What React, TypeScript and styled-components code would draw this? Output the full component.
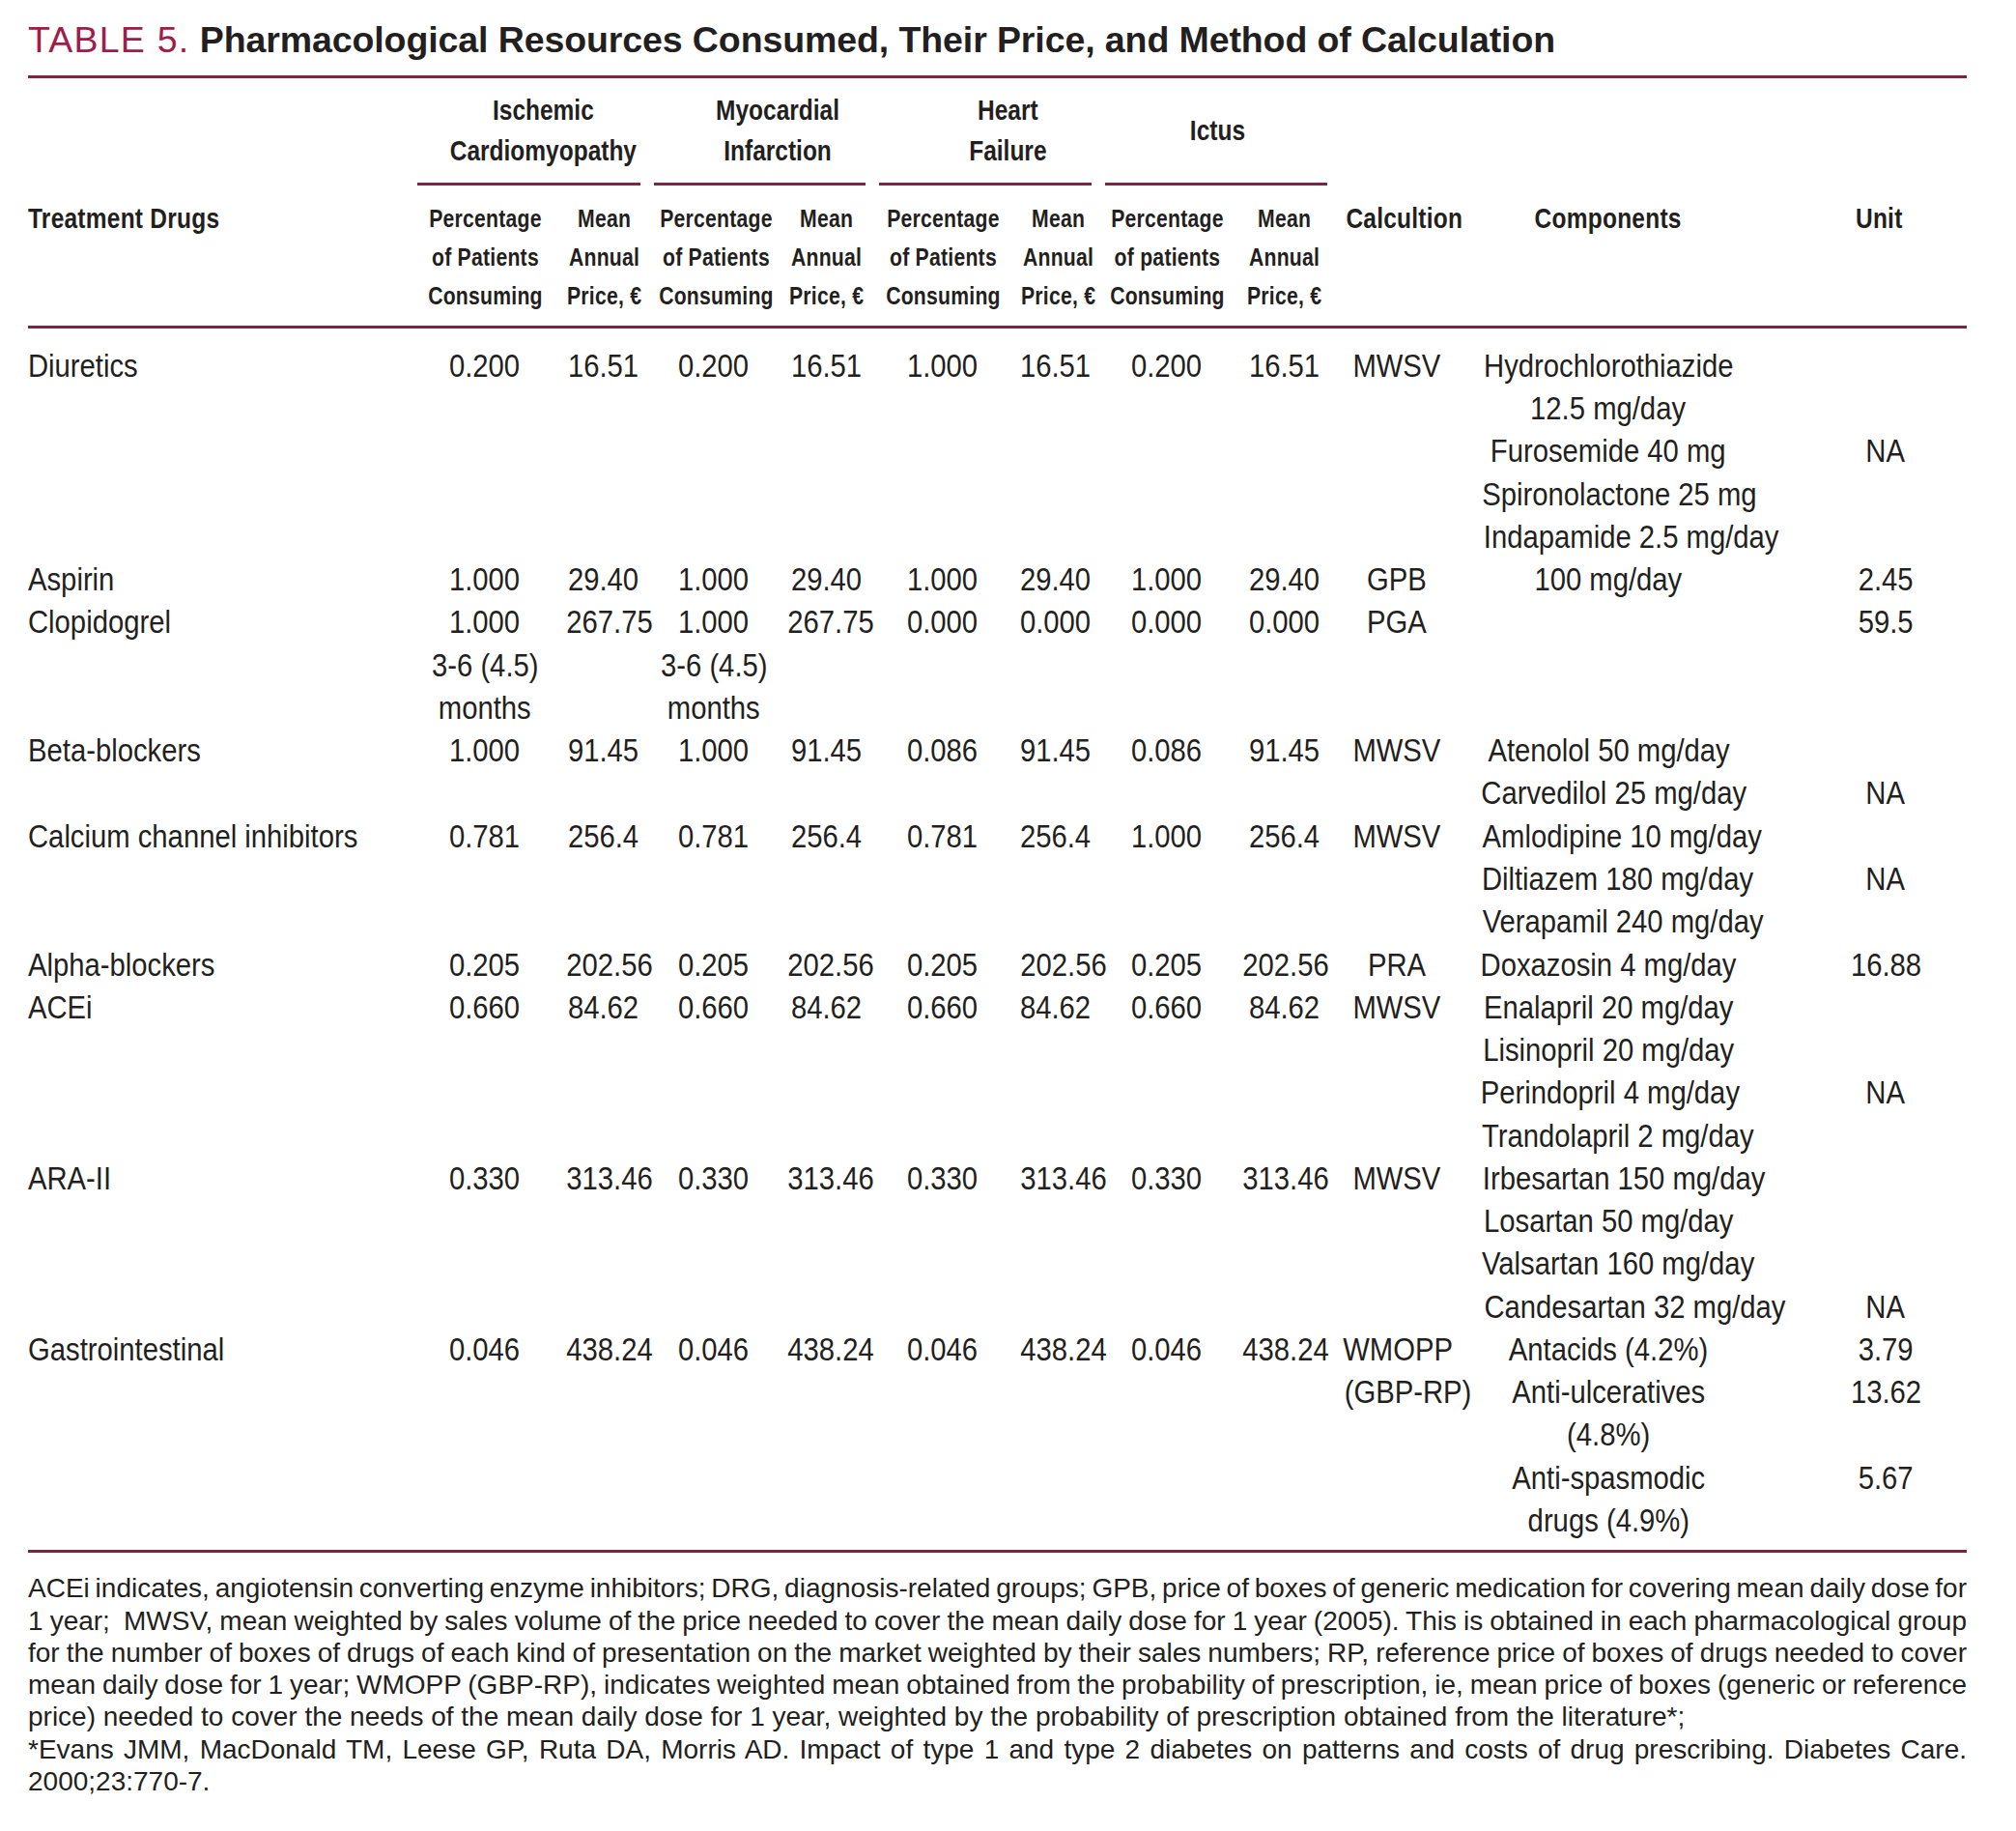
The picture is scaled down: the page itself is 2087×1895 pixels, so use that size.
import React from "react";
import styled, { createGlobalStyle } from "styled-components";

const MAROON = "#7b2545";
const TITLE_RED = "#a01d4a";
const INK = "#231f20";
const SANS = `"Liberation Sans", Arial, Helvetica, sans-serif`;

const BODY_SX = 0.86;
const HEAD_SX = 0.83;

const GlobalStyle = createGlobalStyle`
  html, body { margin: 0; padding: 0; background: #ffffff; }
  body { color: ${INK}; font-family: ${SANS}; }
`;

const Page = styled.div`
  width: 2007px;
  padding: 19px 51px 0 29px;
`;

const Title = styled.h1`
  margin: 0 0 15px;
  font-family: ${SANS};
  font-size: 37.5px;
  line-height: 44px;
  font-weight: 400;
  white-space: nowrap;
`;

const TitleLabel = styled.span`
  color: ${TITLE_RED};
  font-weight: 400;
  letter-spacing: 1.2px;
`;

const TitleText = styled.span`
  color: ${INK};
  font-weight: 700;
  letter-spacing: -0.1px;
`;

/* condensed face: the source uses a condensed grotesque, drawn here by narrowing Liberation Sans */
const Squeeze = styled.span<{ $sx: number; $origin?: string }>`
  display: inline-block;
  transform: scaleX(${(p) => p.$sx});
  transform-origin: ${(p) => p.$origin ?? "center"} center;
`;

const Table = styled.table`
  width: 2007px;
  table-layout: fixed;
  border-collapse: separate;
  border-spacing: 0;
  border-top: 3px solid ${MAROON};
  font-family: ${SANS};
  color: ${INK};
`;

const GroupCell = styled.th`
  padding: 12.3px 0 0;
  font-size: 29.5px;
  font-weight: 700;
  line-height: 42px;
  vertical-align: top;
`;

const GroupLabel = styled.div<{ $ruled?: boolean; $shift?: number }>`
  height: 84px;
  margin: 0 7px;
  padding: 0 0 11.7px ${(p) => (p.$shift ?? 0) * 2}px;
  display: flex;
  align-items: center;
  justify-content: center;
  text-align: center;
  white-space: nowrap;
  border-bottom: 3px solid ${(p) => (p.$ruled ? MAROON : "transparent")};
`;

const HeadCell = styled.th<{ $big?: boolean; $align?: string; $padLeft?: number; $padRight?: number }>`
  padding: 14.5px ${(p) => p.$padRight ?? 0}px 11px ${(p) => p.$padLeft ?? 0}px;
  font-size: ${(p) => (p.$big ? "29.5px" : "25.5px")};
  font-weight: 700;
  line-height: 40px;
  text-align: ${(p) => p.$align ?? "center"};
  vertical-align: top;
  white-space: nowrap;
  border-bottom: 3px solid ${MAROON};
  letter-spacing: 0.3px;
`;

const Body = styled.tbody`
  tr:first-child td {
    padding-top: 15.3px;
  }
  tr:last-child td {
    padding-bottom: 9px;
    border-bottom: 3px solid ${MAROON};
  }
`;

const Line = styled.tr`
  height: 44.27px;
`;

const Cell = styled.td<{ $align?: string; $padLeft?: number }>`
  padding: 0 0 0 ${(p) => p.$padLeft ?? 0}px;
  font-size: 34px;
  line-height: 44.27px;
  font-weight: 400;
  text-align: ${(p) => p.$align ?? "center"};
  vertical-align: top;
  white-space: nowrap;
`;

const Notes = styled.div`
  padding-top: 20px;
  width: 2007px;
  font-family: ${SANS};
  font-size: 28px;
  line-height: 33.3px;
  color: ${INK};
`;

const NoteLine = styled.div<{ $justify?: boolean }>`
  text-align: ${(p) => (p.$justify ? "justify" : "left")};
  text-align-last: ${(p) => (p.$justify ? "justify" : "left")};
  white-space: ${(p) => (p.$justify ? "normal" : "nowrap")};
  word-spacing: ${(p) => (p.$justify ? "-3px" : "0px")};
`;

const UNIT_PAD = 49;
const colWidths = [396, 154, 91, 138, 95, 146, 88, 142, 102, 130, 308, 217];

const groups: { lines: string[]; shift: number }[] = [
  { lines: ["Ischemic", "Cardiomyopathy"], shift: 15 },
  { lines: ["Myocardial", "Infarction"], shift: 19 },
  { lines: ["Heart", "Failure"], shift: 23 },
  { lines: ["Ictus"], shift: 1 },
];

const pctHead = ["Percentage", "of Patients", "Consuming"];
const pctHeadLower = ["Percentage", "of patients", "Consuming"];
const meanHead = ["Mean", "Annual", "Price, €"];

const subHeads: string[][] = [
  pctHead,
  meanHead,
  pctHead,
  meanHead,
  pctHead,
  meanHead,
  pctHeadLower,
  meanHead,
];

const E = "";
const blank8 = [E, E, E, E, E, E, E, E];

const only = (comp: string, unit = E, calc = E): string[] => [E, ...blank8, calc, comp, unit];
const drug = (name: string, v: string[], calc: string, comp: string, unit = E): string[] => [
  name,
  ...v,
  calc,
  comp,
  unit,
];
const vals = (a: string, b: string, c: string, d: string, e: string, f: string, g: string, h: string) => [
  a,
  b,
  c,
  d,
  e,
  f,
  g,
  h,
];

const rows: string[][] = [
  drug("Diuretics", vals("0.200", "16.51", "0.200", "16.51", "1.000", "16.51", "0.200", "16.51"), "MWSV", "Hydrochlorothiazide"),
  only("12.5 mg/day"),
  only("Furosemide 40 mg", "NA"),
  only("Spironolactone 25 mg"),
  only("Indapamide 2.5 mg/day"),
  drug("Aspirin", vals("1.000", "29.40", "1.000", "29.40", "1.000", "29.40", "1.000", "29.40"), "GPB", "100 mg/day", "2.45"),
  drug("Clopidogrel", vals("1.000", "267.75", "1.000", "267.75", "0.000", "0.000", "0.000", "0.000"), "PGA", E, "59.5"),
  [E, "3-6 (4.5)", E, "3-6 (4.5)", E, E, E, E, E, E, E, E],
  [E, "months", E, "months", E, E, E, E, E, E, E, E],
  drug("Beta-blockers", vals("1.000", "91.45", "1.000", "91.45", "0.086", "91.45", "0.086", "91.45"), "MWSV", "Atenolol 50 mg/day"),
  only("Carvedilol 25 mg/day", "NA"),
  drug("Calcium channel inhibitors", vals("0.781", "256.4", "0.781", "256.4", "0.781", "256.4", "1.000", "256.4"), "MWSV", "Amlodipine 10 mg/day"),
  only("Diltiazem 180 mg/day", "NA"),
  only("Verapamil 240 mg/day"),
  drug("Alpha-blockers", vals("0.205", "202.56", "0.205", "202.56", "0.205", "202.56", "0.205", "202.56"), "PRA", "Doxazosin 4 mg/day", "16.88"),
  drug("ACEi", vals("0.660", "84.62", "0.660", "84.62", "0.660", "84.62", "0.660", "84.62"), "MWSV", "Enalapril 20 mg/day"),
  only("Lisinopril 20 mg/day"),
  only("Perindopril 4 mg/day", "NA"),
  only("Trandolapril 2 mg/day"),
  drug("ARA-II", vals("0.330", "313.46", "0.330", "313.46", "0.330", "313.46", "0.330", "313.46"), "MWSV", "Irbesartan 150 mg/day"),
  only("Losartan 50 mg/day"),
  only("Valsartan 160 mg/day"),
  only("Candesartan 32 mg/day", "NA"),
  drug("Gastrointestinal", vals("0.046", "438.24", "0.046", "438.24", "0.046", "438.24", "0.046", "438.24"), "WMOPP", "Antacids (4.2%)", "3.79"),
  only("Anti-ulceratives", "13.62", "(GBP-RP)"),
  only("(4.8%)"),
  only("Anti-spasmodic", "5.67"),
  only("drugs (4.9%)"),
];

const notes: { text: string; justify: boolean }[] = [
  {
    text: "ACEi indicates, angiotensin converting enzyme inhibitors; DRG, diagnosis-related groups; GPB, price of boxes of generic medication for covering mean daily dose for",
    justify: true,
  },
  {
    text: "1 year;\u00a0 MWSV, mean weighted by sales volume of the price needed to cover the mean daily dose for 1 year (2005). This is obtained in each pharmacological group",
    justify: true,
  },
  {
    text: "for the number of boxes of drugs of each kind of presentation on the market weighted by their sales numbers; RP, reference price of boxes of drugs needed to cover",
    justify: true,
  },
  {
    text: "mean daily dose for 1 year; WMOPP (GBP-RP), indicates weighted mean obtained from the probability of prescription, ie, mean price of boxes (generic or reference",
    justify: true,
  },
  {
    text: "price) needed to cover the needs of the mean daily dose for 1 year, weighted by the probability of prescription obtained from the literature*;",
    justify: false,
  },
  {
    text: "*Evans JMM, MacDonald TM, Leese GP, Ruta DA, Morris AD. Impact of type 1 and type 2 diabetes on patterns and costs of drug prescribing. Diabetes Care.",
    justify: true,
  },
  { text: "2000;23:770-7.", justify: false },
];

const Multi: React.FC<{ lines: string[] }> = ({ lines }) => (
  <>
    {lines.map((l, i) => (
      <React.Fragment key={i}>
        {i > 0 && <br />}
        {l}
      </React.Fragment>
    ))}
  </>
);

export default function App() {
  return (
    <>
      <GlobalStyle />
      <Page>
        <Title>
          <TitleLabel>TABLE 5.</TitleLabel>{" "}
          <TitleText>Pharmacological Resources Consumed, Their Price, and Method of Calculation</TitleText>
        </Title>
        <Table>
          <colgroup>
            {colWidths.map((w, i) => (
              <col key={i} style={{ width: w }} />
            ))}
          </colgroup>
          <thead>
            <tr>
              <GroupCell />
              {groups.map((g, i) => (
                <GroupCell key={i} colSpan={2}>
                  <GroupLabel $ruled $shift={g.shift}>
                    <Squeeze $sx={HEAD_SX}>
                      <Multi lines={g.lines} />
                    </Squeeze>
                  </GroupLabel>
                </GroupCell>
              ))}
              <GroupCell />
              <GroupCell />
              <GroupCell />
            </tr>
            <tr>
              <HeadCell $big $align="left">
                <Squeeze $sx={HEAD_SX} $origin="left">
                  Treatment Drugs
                </Squeeze>
              </HeadCell>
              {subHeads.map((h, i) => (
                <HeadCell key={i}>
                  <Squeeze $sx={HEAD_SX}>
                    <Multi lines={h} />
                  </Squeeze>
                </HeadCell>
              ))}
              <HeadCell $big $padRight={14}>
                <Squeeze $sx={HEAD_SX}>Calcultion</Squeeze>
              </HeadCell>
              <HeadCell $big>
                <Squeeze $sx={HEAD_SX}>Components</Squeeze>
              </HeadCell>
              <HeadCell $big $padLeft={UNIT_PAD} $padRight={14}>
                <Squeeze $sx={HEAD_SX}>Unit</Squeeze>
              </HeadCell>
            </tr>
          </thead>
          <Body>
            {rows.map((r, ri) => (
              <Line key={ri}>
                {r.map((c, ci) => (
                  <Cell key={ci} $align={ci === 0 ? "left" : "center"} $padLeft={ci === 11 ? UNIT_PAD : 0}>
                    {c && (
                      <Squeeze $sx={BODY_SX} $origin={ci === 0 ? "left" : "center"}>
                        {c}
                      </Squeeze>
                    )}
                  </Cell>
                ))}
              </Line>
            ))}
          </Body>
        </Table>
        <Notes>
          {notes.map((n, i) => (
            <NoteLine key={i} $justify={n.justify}>
              {n.text}
            </NoteLine>
          ))}
        </Notes>
      </Page>
    </>
  );
}
